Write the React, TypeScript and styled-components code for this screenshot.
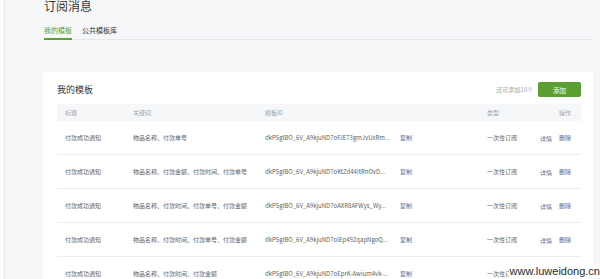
import React from "react";
import styled, { createGlobalStyle } from "styled-components";

const GlobalStyle = createGlobalStyle`
  html, body {
    margin: 0;
    padding: 0;
    background: #f6f7f9;
    overflow: hidden;
  }
  body {
    font-family: "Noto Sans CJK SC", "Noto Sans", sans-serif;
    color: #353535;
  }
`;

const colors = {
  green: "#5a9f30",
  link: "#576b95",
  text: "#5f5f5f",
  muted: "#a3a3a3",
  line: "#ededed",
};

const Page = styled.div`
  position: relative;
  display: flex;
  width: 600px;
  height: 279px;
  overflow: hidden;
`;

const Sidebar = styled.div`
  width: 4px;
  background: #fbfbfc;
  border-right: 1px solid #e7e8eb;
  flex-shrink: 0;
`;

const Main = styled.div`
  flex: 1;
  padding: 0 7px 0 38px;
`;

const Title = styled.h2`
  margin: 0 0 0 1px;
  font-size: 12px;
  line-height: 12px;
  font-weight: 400;
  color: #353535;
`;

const TabBar = styled.div`
  display: flex;
  gap: 10px;
  margin: 0 0 0 1px;
  border-bottom: 1px solid #e4e6ea;
`;

const Tab = styled.div<{ $active?: boolean }>`
  padding: 13px 0 3px;
  font-size: 7px;
  line-height: 10px;
  color: ${(p) => (p.$active ? colors.green : "#353535")};
  border-bottom: 2px solid ${(p) => (p.$active ? colors.green : "transparent")};
  margin-bottom: -1px;
`;

const Card = styled.div`
  margin-top: 32px;
  background: #fff;
  padding: 10px 12px 0 14px;
  min-height: 260px;
`;

const CardHeader = styled.div`
  display: flex;
  align-items: center;
  height: 15px;
`;

const CardTitle = styled.h3`
  margin: 0;
  flex: 1;
  font-size: 9px;
  line-height: 15px;
  font-weight: 400;
  color: #353535;
`;

const Quota = styled.span`
  font-size: 6px;
  color: ${colors.muted};
  margin-right: 5px;
`;

const AddButton = styled.button`
  width: 43px;
  height: 15px;
  border: none;
  border-radius: 2px;
  background: ${colors.green};
  color: #fff;
  font-family: inherit;
  font-size: 6.5px;
  padding: 0;
`;

const Table = styled.div`
  margin-top: 7px;
`;

const Row = styled.div<{ $head?: boolean }>`
  display: grid;
  grid-template-columns: 68px 132px 222px 55px 1fr;
  align-items: center;
  height: ${(p) => (p.$head ? "17px" : "33px")};
  background: ${(p) => (p.$head ? "#f6f7f9" : "#fff")};
  border-bottom: ${(p) => (p.$head ? "none" : `1px solid ${colors.line}`)};
  font-size: 6px;
  color: ${(p) => (p.$head ? colors.muted : colors.text)};
`;

const Cell = styled.div<{ $right?: boolean }>`
  padding: ${(p) => (p.$right ? "0 10px 0 0" : "0 0 0 8px")};
  text-align: ${(p) => (p.$right ? "right" : "left")};
  white-space: nowrap;
  overflow: hidden;
`;

const IdText = styled.span`
  display: inline-block;
  width: 128px;
  overflow: hidden;
  vertical-align: middle;
`;

const Link = styled.a<{ $gap?: number }>`
  color: ${colors.link};
  text-decoration: none;
  margin-left: ${(p) => p.$gap ?? 0}px;
  vertical-align: middle;
`;

const Watermark = styled.div`
  position: absolute;
  right: 0;
  bottom: 1px;
  padding: 1px 0 1px 1px;
  background: #fff;
  font-family: "Liberation Sans", Arial, sans-serif;
  font-size: 11px;
  line-height: 12px;
  color: #2a2a2a;
`;

const rows = [
  { keywords: "物品名称、付款单号", id: "dkP5gIBO_6V_A9kjuND7oFJE73gmJvUxRm..." },
  { keywords: "物品名称、付款金额、付款时间、付款单号", id: "dkP5gIBO_6V_A9kjuND7oKtZd44ItRnOvD..." },
  { keywords: "物品名称、付款时间、付款单号、付款金额", id: "dkP5gIBO_6V_A9kjuND7oAXR8AFWys_Wy..." },
  { keywords: "物品名称、付款时间、付款单号、付款金额", id: "dkP5gIBO_6V_A9kjuND7oIEp49ZqapNgoQ..." },
  { keywords: "物品名称、付款时间、付款金额", id: "dkP5gIBO_6V_A9kjuND7oEprK-Awium4vk-..." },
];

export default function App() {
  return (
    <>
      <GlobalStyle />
      <Page>
        <Sidebar />
        <Main>
          <Title>订阅消息</Title>
          <TabBar>
            <Tab $active>我的模板</Tab>
            <Tab>公共模板库</Tab>
          </TabBar>
          <Card>
            <CardHeader>
              <CardTitle>我的模板</CardTitle>
              <Quota>还可添加10个</Quota>
              <AddButton>添加</AddButton>
            </CardHeader>
            <Table>
              <Row $head>
                <Cell>标题</Cell>
                <Cell>关键词</Cell>
                <Cell>模板ID</Cell>
                <Cell>类型</Cell>
                <Cell $right>操作</Cell>
              </Row>
              {rows.map((r, i) => (
                <Row key={r.id}>
                  <Cell>付款成功通知</Cell>
                  <Cell>{r.keywords}</Cell>
                  <Cell>
                    <IdText>{r.id}</IdText>
                    <Link $gap={7}>复制</Link>
                  </Cell>
                  <Cell>一次性订阅</Cell>
                  {i < rows.length - 1 ? (
                    <Cell $right>
                      <Link>详情</Link>
                      <Link $gap={7}>删除</Link>
                    </Cell>
                  ) : (
                    <Cell />
                  )}
                </Row>
              ))}
            </Table>
          </Card>
        </Main>
        <Watermark>www.luweidong.cn</Watermark>
      </Page>
    </>
  );
}
